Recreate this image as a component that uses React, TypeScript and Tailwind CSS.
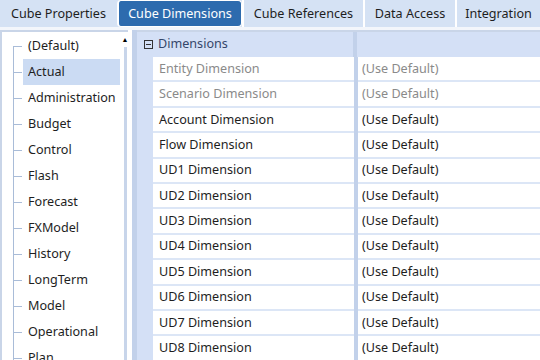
import React from "react";

const tabs = [
  { label: "Cube Properties", w: "w-[117px]" },
  { label: "Cube Dimensions", w: "w-[125px]", active: true },
  { label: "Cube References", w: "w-[121px]" },
  { label: "Data Access", w: "w-[92px]" },
  { label: "Integration", w: "flex-1" },
];

const cubes = [
  "(Default)",
  "Actual",
  "Administration",
  "Budget",
  "Control",
  "Flash",
  "Forecast",
  "FXModel",
  "History",
  "LongTerm",
  "Model",
  "Operational",
  "Plan",
];

const dims = [
  { name: "Entity Dimension", muted: true },
  { name: "Scenario Dimension", muted: true },
  { name: "Account Dimension" },
  { name: "Flow Dimension" },
  { name: "UD1 Dimension" },
  { name: "UD2 Dimension" },
  { name: "UD3 Dimension" },
  { name: "UD4 Dimension" },
  { name: "UD5 Dimension" },
  { name: "UD6 Dimension" },
  { name: "UD7 Dimension" },
  { name: "UD8 Dimension" },
];

export default function App() {
  return (
    <div
      className="w-[540px] h-[360px] overflow-hidden bg-white text-[12.6px] text-[#1e1e1e] flex flex-col"
      style={{ fontFamily: '"Segoe UI", "Noto Sans", sans-serif' }}
    >
      {/* Tabs */}
      <div className="flex h-[27px] bg-[#d5e2f4] shrink-0">
        {tabs.map((t, i) => (
          <div
            key={t.label}
            className={`${t.w} h-full flex items-center justify-center pt-[1px] ${
              i > 0 ? "border-l-2 border-white" : ""
            } ${
              t.active
                ? "bg-[#2d6bae] text-white rounded-[4px] border border-[#5b8fc8]"
                : ""
            }`}
          >
            {t.label}
          </div>
        ))}
      </div>

      <div className="h-[3px] bg-[#f3f6fb] shrink-0" />

      {/* Body */}
      <div className="flex flex-1 min-h-0">
        {/* Cube tree */}
        <div className="w-[128px] flex border-l-2 border-t-2 border-[#c9d5e8] bg-white">
          <div className="relative flex-1 pt-[1px]">
            {/* vertical tree line */}
            <div className="absolute left-[11px] top-[14px] bottom-0 w-px bg-[#a9bcd8]" />
            {cubes.map((c) => (
              <div key={c} className="relative h-[26px] flex items-center">
                <div className="absolute left-[11px] top-[13px] w-[9px] h-px bg-[#a9bcd8]" />
                <div
                  className={`ml-[21px] w-[97px] h-full flex items-center pl-[5px] ${
                    c === "Actual" ? "bg-[#cbdbf3]" : ""
                  }`}
                >
                  {c}
                </div>
              </div>
            ))}
          </div>
          {/* scroll bar */}
          <div className="w-[6px] flex flex-col items-center">
            <div className="text-[7px] leading-none mt-[4px] text-black">▲</div>
            <div className="mt-[4px] flex-1 w-[3px] bg-[#c8d5ea]" />
          </div>
        </div>

        <div className="w-[4px] bg-white" />
        <div className="w-[5px] bg-[#c2d1ea]" />

        {/* Property grid */}
        <div className="flex-1 flex flex-col bg-[#d4e0f6] border-t-2 border-[#c9d5e8]">
          <div className="h-[25px] flex items-center shrink-0">
            <div className="w-[16px] flex justify-center ml-[3px]">
              <div className="w-[9px] h-[9px] border border-[#333] flex items-center justify-center">
                <div className="w-[5px] h-px bg-[#333]" />
              </div>
            </div>
            <span className="ml-[2px] text-[#34466a]">Dimensions</span>
            <div className="ml-auto mr-[183px] w-[4px] self-stretch bg-[#c2d1ea]" />
          </div>
          {dims.map((d) => (
            <div key={d.name} className="h-[25.4px] flex shrink-0">
              <div className="w-[16px] bg-[#d4e0f6]" />
              <div
                className={`w-[201px] bg-white border-b-2 border-[#dce6f6] flex items-center pl-[6px] pt-[1px] ${
                  d.muted ? "text-[#8a8a8a]" : ""
                }`}
              >
                {d.name}
              </div>
              <div className="w-[4px] bg-[#c2d1ea]" />
              <div
                className={`flex-1 bg-white border-b-2 border-[#dce6f6] flex items-center pl-[4px] pt-[1px] ${
                  d.muted ? "text-[#8a8a8a]" : ""
                }`}
              >
                (Use Default)
              </div>
            </div>
          ))}
        </div>
      </div>
    </div>
  );
}
